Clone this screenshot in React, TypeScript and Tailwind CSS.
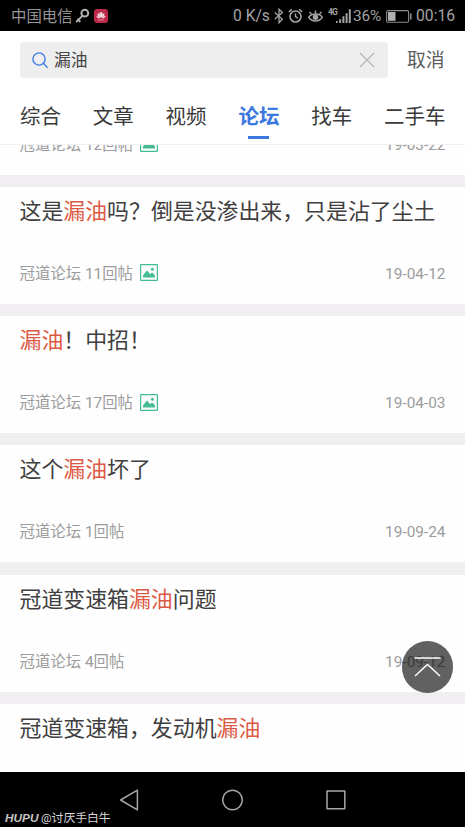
import { Fragment } from 'react'

type Post = {
  title: string
  replies: number
  date: string
  hasImage?: boolean
}

const KEYWORD = '漏油'

const TABS = ['综合', '文章', '视频', '论坛', '找车', '二手车']
const ACTIVE_TAB = '论坛'

const POSTS: Post[] = [
  { title: '这是漏油吗？倒是没渗出来，只是沾了尘土', replies: 11, date: '19-04-12', hasImage: true },
  { title: '漏油！中招！', replies: 17, date: '19-04-03', hasImage: true },
  { title: '这个漏油坏了', replies: 1, date: '19-09-24' },
  { title: '冠道变速箱漏油问题', replies: 4, date: '19-09-12' },
]

function StatusBar() {
  return (
    <div className="flex h-[31px] shrink-0 items-center justify-between bg-black pl-[11px] pr-[11px] pt-[1px] text-[15px] leading-[30px] text-[#a3a3a3]">
      <div className="flex items-center">
        <span className="pt-[2px] text-[15.4px] leading-[28px] text-[#969696]">中国电信</span>
        <svg className="ml-[2px]" width="16" height="16" viewBox="0 0 16 16" fill="none" stroke="#b0b0b0">
          <circle cx="9.8" cy="5.2" r="3.4" strokeWidth="2" />
          <path d="M7.4 7.8L1.6 13.6M2.8 11.4l2 2" strokeWidth="1.9" strokeLinecap="round" />
        </svg>
        <svg className="ml-[3px]" width="14" height="14" viewBox="0 0 15 15">
          <rect width="15" height="15" rx="3.5" fill="#bd2848" />
          <path
            d="M7.2 9.2C5.6 7.2 5.4 4.5 6.8 3.2c.8 1.2.8 3.8.4 6zM7.8 9.2c1.6-2 1.8-4.7.4-6-.8 1.2-.8 3.8-.4 6zM6.6 9.3C4.5 8.2 3.6 6.4 4.2 4.6c1.3.9 2 2.7 2.4 4.7zM8.4 9.3c2.1-1.1 3-2.9 2.4-4.7-1.3.9-2 2.7-2.4 4.7zM6.2 9.6c-1.8.3-3.2-.6-3.3-2.2 1.3.3 2.4 1.1 3.3 2.2zM8.8 9.6c1.8.3 3.2-.6 3.3-2.2-1.3.3-2.4 1.1-3.3 2.2z"
            fill="#f4dfe3"
            stroke="#f4dfe3"
            strokeWidth="0.4"
          />
          <path d="M4.2 11.7h6.6" stroke="#e0a0ae" strokeWidth="0.9" />
        </svg>
      </div>
      <div className="flex items-center">
        <span className="w-[37px] whitespace-nowrap text-[15.6px]">0 K/s</span>
        <svg className="ml-[4px]" width="10" height="16" viewBox="0 0 10 16" fill="none" stroke="currentColor" strokeWidth="1.3">
          <path d="M.8 4.5l7.6 6.8L5 14.8V1.2l3.4 3.3L.8 11.3" />
        </svg>
        <svg className="ml-[4px]" width="15" height="16" viewBox="0 0 15 16" fill="none" stroke="currentColor" strokeWidth="1.6">
          <circle cx="7.5" cy="8.5" r="5.5" />
          <path d="M7.5 5.5v3.2l2.3 1.5M.8 4L3.9 1.4M14.2 4l-3.1-2.6" strokeWidth="1.4" />
        </svg>
        <svg className="ml-[4px]" width="17" height="16" viewBox="0 0 18 16" fill="none" stroke="currentColor">
          <path d="M1.8 9.2C5 4.7 13 4.7 16.2 9.2 13 14.6 5 14.6 1.8 9.2z" strokeWidth="1.6" />
          <circle cx="9" cy="9.3" r="2.9" fill="currentColor" stroke="none" />
          <path d="M9 5.7V2.3M4.800 6.300L2.700 3.600M13.200 6.300l2.100-2.700" strokeWidth="1.5" />
        </svg>
        <div className="mb-[1px] ml-[4px] flex h-[16px] w-[23px] items-start">
          <span className="w-[8px] text-[8.5px] font-bold leading-[9px] tracking-[-0.8px]">4G</span>
          <svg width="15" height="16" viewBox="0 0 15 16" fill="currentColor">
            <path d="M0 13h1.6v2H0zM3.2 11.200h2V15h-2zM6.4 8.200h2V15h-2zM9.6 5.200h2V15h-2zM12.8 1.200h2V15h-2z" />
          </svg>
        </div>
        <span className="ml-[2px] w-[28px] text-[15.4px] tracking-[-0.2px]">36%</span>
        <svg className="ml-[5px]" width="26" height="13" viewBox="0 0 26 13">
          <rect x="0.6" y="0.6" width="22" height="11.6" rx="1.5" fill="none" stroke="#8c8c8c" strokeWidth="1.1" />
          <rect x="2" y="2" width="7.5" height="8.8" fill="#b0b0b0" />
          <path d="M24 3.5h1.6v6H24z" fill="#8c8c8c" />
        </svg>
        <span className="ml-[4px] w-[38px] text-[15.7px]">00:16</span>
      </div>
    </div>
  )
}

function SearchRow() {
  return (
    <div className="flex h-[58px] shrink-0 items-center px-5">
      <div className="flex h-[36px] w-[368px] items-center rounded-[4px] bg-[#eeeeee] pl-3 pr-[13px]">
        <svg width="16" height="16" viewBox="0 0 16 16" fill="none" stroke="#3f7fe6" strokeWidth="1.4" strokeLinecap="round">
          <circle cx="7" cy="7" r="6.1" />
          <path d="M11.5 11.5l3.7 3.7" />
        </svg>
        <span className="ml-[6px] flex-1 pt-[2px] text-[16.8px] text-[#444]">{KEYWORD}</span>
        <svg width="16" height="16" viewBox="0 0 16 16" stroke="#b4b4b4" strokeWidth="1.2">
          <path d="M1 1l14 14M15 1L1 15" />
        </svg>
      </div>
      <span className="ml-[19px] pt-[3px] whitespace-nowrap text-[18.8px] text-[#5c5c5c]">取消</span>
    </div>
  )
}

function TabBar() {
  return (
    <div className="flex h-[56px] shrink-0 gap-[31.8px] border-b border-[#f0f0f2] px-5">
      {TABS.map((tab) => (
        <div key={tab} className="flex flex-col items-center whitespace-nowrap">
          <span
            className={
              tab === ACTIVE_TAB
                ? 'mt-[11px] text-[20.5px] leading-[34px] font-bold text-[#3b78e0]'
                : 'mt-[11px] text-[20.5px] leading-[34px] text-[#3a3a3a]'
            }
          >
            {tab}
          </span>
          {tab === ACTIVE_TAB && <span className="mt-[2px] h-[2.5px] w-[21px] bg-[#3b78e0]" />}
        </div>
      ))}
    </div>
  )
}

function Highlighted({ text }: { text: string }) {
  return (
    <>
      {text.split(KEYWORD).map((part, i) => (
        <Fragment key={i}>
          {i > 0 && <span className="text-[#dc5a45]">{KEYWORD}</span>}
          {part}
        </Fragment>
      ))}
    </>
  )
}

function PostMeta({ replies, date, hasImage }: { replies: number; date: string; hasImage?: boolean }) {
  return (
    <div className="flex h-6 items-center text-[15.4px] leading-6 text-[#9c9c9c]">
      <span className="-ml-[0.5px] whitespace-nowrap">冠道论坛 {replies}回帖</span>
      {hasImage && (
        <svg className="mb-[2px] ml-[7px]" width="18" height="17" viewBox="0 0 18 17">
          <rect x="0.6" y="0.6" width="16.8" height="15.8" rx="0.5" fill="none" stroke="#42bc90" strokeWidth="1.2" />
          <path d="M3 13.5v-2l3.2-4.3q.8-.9 1.6 0l2.4 3 1.2-1.3q.7-.6 1.4 0l2.2 2.6v2z" fill="#42bc90" />
          <circle cx="12.4" cy="5.3" r="1.5" fill="#42bc90" />
        </svg>
      )}
      <span className="ml-auto -mr-[0.5px]">{date}</span>
    </div>
  )
}

function PostTitle({ text }: { text: string }) {
  return (
    <h2 className="-ml-[0.5px] whitespace-nowrap text-[21.9px] leading-8 font-normal text-[#403e40]">
      <Highlighted text={text} />
    </h2>
  )
}

function PostCard({ post }: { post: Post }) {
  return (
    <div className="h-[117px] shrink-0 bg-[#fefefe] px-5 pt-[9px]">
      <PostTitle text={post.title} />
      <div className="mt-[34px]">
        <PostMeta replies={post.replies} date={post.date} hasImage={post.hasImage} />
      </div>
    </div>
  )
}

function NavBar() {
  return (
    <div className="relative flex h-[55px] shrink-0 items-center justify-center gap-[82px] bg-black">
      <svg width="22" height="22" viewBox="0 0 22 22" fill="none" stroke="#a6a6a6" strokeWidth="1.5" strokeLinejoin="round">
        <path d="M19.4 1.2v19.6L2.6 11z" />
      </svg>
      <svg width="22" height="22" viewBox="0 0 22 22" fill="none" stroke="#a6a6a6" strokeWidth="1.5">
        <circle cx="10.5" cy="11" r="9.8" />
      </svg>
      <svg width="22" height="22" viewBox="0 0 22 22" fill="none" stroke="#a6a6a6" strokeWidth="1.5" strokeLinejoin="round">
        <rect x="1" y="2" width="17.8" height="17.8" />
      </svg>
      <div className="absolute bottom-0 left-[5px] flex items-center whitespace-nowrap text-[11.8px] leading-[18px] text-[#d8d8d8]">
        <span className="w-[36px] font-['Liberation_Sans'] text-[11.8px] font-bold italic text-[#c4c4c4]">HUPU</span>
        <span>@讨厌手白牛</span>
      </div>
    </div>
  )
}

export default function App() {
  return (
    <div className="relative flex h-[827px] w-[465px] flex-col overflow-hidden bg-white font-['Roboto','Noto_Sans_CJK_SC',sans-serif]">
      <StatusBar />
      <SearchRow />
      <TabBar />

      <div className="flex min-h-0 flex-1 flex-col gap-[12.2px] overflow-hidden bg-[#f0eef1]">
        {/* Tail of the post scrolled under the tab bar */}
        <div className="flex h-[29.8px] shrink-0 flex-col justify-end overflow-hidden bg-[#fefefe] px-5 pb-[18px]">
          <PostMeta replies={12} date="19-03-22" hasImage />
        </div>
        {POSTS.map((post) => (
          <PostCard key={post.title} post={post} />
        ))}
        <div className="flex-1 bg-[#fefefe] px-5 pt-[9px]">
          <PostTitle text="冠道变速箱，发动机漏油" />
        </div>
      </div>

      <NavBar />

      <button
        aria-label="回到顶部"
        className="absolute right-[12px] bottom-[134.5px] flex size-[51.5px] items-center justify-center rounded-full bg-black/62"
      >
        <svg width="28" height="22" viewBox="0 0 28 22" fill="none" stroke="#fff" strokeWidth="1.5">
          <path d="M1.5 2h26M2 20L14.5 8.5 27 20" />
        </svg>
      </button>
    </div>
  )
}
